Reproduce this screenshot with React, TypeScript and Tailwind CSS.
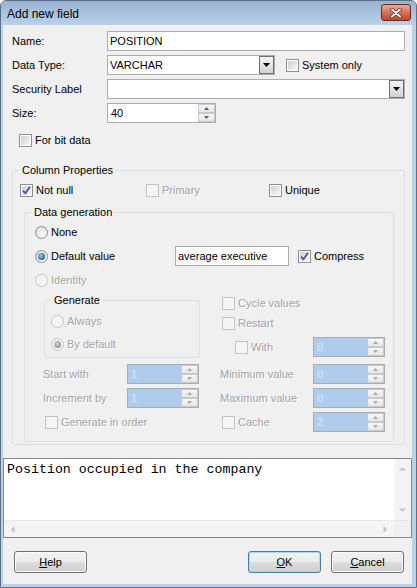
import clsx from "clsx";
import type { ReactNode } from "react";

type Flags = { checked?: boolean; disabled?: boolean };

const dimText = "text-[#a2a2a2] [text-shadow:1px_1px_0_#ffffff]";

function Check({ checked, disabled }: Flags) {
  return (
    <span
      className={clsx(
        "flex h-[13px] w-[13px] shrink-0 items-center justify-center border",
        disabled ? "border-[#c4c4c4] bg-[#f5f5f5]" : "border-[#8e8f8f] bg-white"
      )}
    >
      <span
        className={clsx(
          "flex h-[9px] w-[9px] items-center justify-center",
          disabled ? "bg-[#f5f5f5]" : "bg-gradient-to-br from-[#cdd0d5] to-[#f6f6f6]"
        )}
      >
        {checked && (
          <svg width="9" height="9" viewBox="0 0 9 9" className="overflow-visible">
            <path d="M1 4.6 L3.4 7.2 L8 0.8" fill="none" stroke="#4a5f97" strokeWidth="1.9" />
          </svg>
        )}
      </span>
    </span>
  );
}

function Radio({ checked, disabled }: Flags) {
  return (
    <span
      className={clsx(
        "flex h-[13px] w-[13px] shrink-0 items-center justify-center rounded-full border",
        disabled
          ? "border-[#c4c4c4] bg-[#f4f4f4]"
          : "border-[#8e8f8f] bg-[radial-gradient(circle_at_65%_65%,#ffffff,#d2d2d2)]"
      )}
    >
      {checked && (
        <span
          className={clsx(
            "h-[7px] w-[7px] rounded-full",
            disabled
              ? "bg-[radial-gradient(circle_at_40%_40%,#d6d6d6,#8c8c8c_80%)]"
              : "bg-[radial-gradient(circle_at_40%_40%,#8fdcf7,#14598a_75%)]"
          )}
        />
      )}
    </span>
  );
}

function CheckItem({ label, className, ...f }: Flags & { label: string; className?: string }) {
  return (
    <div className={clsx("flex h-[13px] items-center gap-[3px]", className)}>
      <Check {...f} />
      <span className={clsx("leading-[13px]", f.disabled ? dimText : "text-black")}>{label}</span>
    </div>
  );
}

function RadioItem({ label, className, ...f }: Flags & { label: string; className?: string }) {
  return (
    <div className={clsx("flex h-[13px] items-center gap-[3px]", className)}>
      <Radio {...f} />
      <span className={clsx("leading-[13px]", f.disabled ? dimText : "text-black")}>{label}</span>
    </div>
  );
}

function Spin({ disabled }: { disabled?: boolean }) {
  const fill = disabled ? "#a9a9a9" : "#4d6185";
  return (
    <span className="flex w-[17px] shrink-0 flex-col">
      <span className="flex flex-1 items-center justify-center border border-[#c9c9c9] bg-gradient-to-b from-[#f7f7f7] to-[#e6e6e6]">
        <svg width="5" height="3" viewBox="0 0 5 3">
          <path d="M0 3 L2.5 0 L5 3Z" fill={fill} />
        </svg>
      </span>
      <span className="flex flex-1 items-center justify-center border border-[#c9c9c9] bg-gradient-to-b from-[#f7f7f7] to-[#e6e6e6]">
        <svg width="5" height="3" viewBox="0 0 5 3">
          <path d="M0 0 L5 0 L2.5 3Z" fill={fill} />
        </svg>
      </span>
    </span>
  );
}

function NumBox({ value, disabled, className }: { value: string; disabled?: boolean; className?: string }) {
  return (
    <div
      className={clsx(
        "flex h-[20px] shrink-0 border",
        disabled ? "border-[#a9acb1] bg-[#b0ccec]" : "border-[#abadb3] bg-white",
        className
      )}
    >
      <span className={clsx("flex-1 pl-[3px] leading-[18px]", disabled ? "text-[#dfe7f0]" : "text-black")}>
        {value}
      </span>
      <Spin disabled={disabled} />
    </div>
  );
}

function TextBox({ value, className }: { value: string; className?: string }) {
  return (
    <div className={clsx("h-[20px] border border-[#abadb3] bg-white pl-[2px] leading-[18px] text-black", className)}>
      {value}
    </div>
  );
}

function Combo({ value, className }: { value: string; className?: string }) {
  return (
    <div className={clsx("flex h-[20px] items-center border border-[#abadb3] bg-white", className)}>
      <span className="flex-1 pl-[2px] text-black">{value}</span>
      <span className="flex h-[18px] w-[15px] items-center justify-center border border-[#707070] bg-gradient-to-b from-[#f3f3f3] to-[#d2d2d2]">
        <svg width="7" height="4" viewBox="0 0 7 4">
          <path d="M0 0H7L3.5 4Z" fill="#000" />
        </svg>
      </span>
    </div>
  );
}

function Group({ title, className, children }: { title: string; className?: string; children: ReactNode }) {
  return (
    <fieldset className={clsx("rounded-[3px] border border-[#d5dfe5]", className)}>
      <legend className="ml-[7px] px-[2px] leading-[13px] text-black">{title}</legend>
      {children}
    </fieldset>
  );
}

function Btn({ children, primary, className }: { children: ReactNode; primary?: boolean; className?: string }) {
  return (
    <div
      className={clsx(
        "flex h-[22px] w-[73px] items-center justify-center rounded-[3px] border bg-[linear-gradient(#f2f2f2,#ebebeb_50%,#dddddd_50%,#cfcfcf)] text-black",
        primary ? "border-[#3c7fb1] shadow-[inset_0_0_0_1px_#9fdcf7]" : "border-[#707070] shadow-[inset_0_0_0_1px_#fbfbfb]",
        className
      )}
    >
      {children}
    </div>
  );
}

function Arrow({ d }: { d: string }) {
  return (
    <svg width="7" height="7" viewBox="0 0 7 7">
      <path d={d} fill="#c2c2c2" />
    </svg>
  );
}

export default function App() {
  return (
    <div className="flex h-[588px] w-[417px] flex-col overflow-hidden rounded-t-[6px] border border-[#5d7088] bg-[#b9d1ea] font-['Liberation_Sans',Arial,sans-serif] text-[11px]">
      {/* title bar */}
      <div className="flex h-[24px] shrink-0 items-start justify-between bg-gradient-to-b from-[#98b3d2] to-[#b9d1ea] pl-[6px] pr-[5px]">
        <span className="mt-[6px] text-[12px] leading-[14px] text-black">Add new field</span>
        <div className="mt-[3px] flex h-[17px] w-[30px] items-center justify-center rounded-[3px] border border-[#6e2b20] bg-gradient-to-b from-[#e9ab9c] via-[#d5705c] to-[#c0432d]">
          <svg width="12" height="10" viewBox="0 0 12 10">
            <path d="M2 1.5 L10 8.5 M10 1.5 L2 8.5" stroke="#5b2a22" strokeWidth="3.6" strokeLinecap="round" />
            <path d="M2 1.5 L10 8.5 M10 1.5 L2 8.5" stroke="#ffffff" strokeWidth="2" strokeLinecap="round" />
          </svg>
        </div>
      </div>

      {/* client */}
      <div className="mb-[3px] ml-[2px] mr-[4px] flex flex-1 flex-col bg-[#f0f0f0]">
        <div className="flex flex-col pl-[9px] pr-[7px] pt-[6px]">
          <div className="flex h-[20px] items-center">
            <span className="w-[95px] text-black">Name:</span>
            <TextBox value="POSITION" className="flex-1" />
          </div>
          <div className="mt-[4px] flex h-[20px] items-center">
            <span className="w-[95px] text-black">Data Type:</span>
            <Combo value="VARCHAR" className="w-[168px]" />
            <CheckItem label="System only" className="ml-[11px]" />
          </div>
          <div className="mt-[4px] flex h-[20px] items-center">
            <span className="w-[95px] text-black">Security Label</span>
            <Combo value="" className="flex-1" />
          </div>
          <div className="mt-[4px] flex h-[20px] items-center">
            <span className="w-[95px] text-black">Size:</span>
            <NumBox value="40" className="w-[109px]" />
          </div>
          <CheckItem label="For bit data" className="ml-[7px] mt-[11px]" />

          <Group title="Column Properties" className="mt-[17px]">
            <div className="flex flex-col pb-[2px]">
              <div className="mt-[7px] flex pl-[7px]">
                <CheckItem label="Not null" checked className="w-[126px]" />
                <CheckItem label="Primary" disabled className="w-[123px]" />
                <CheckItem label="Unique" />
              </div>

              <Group title="Data generation" className="ml-[11px] mr-[10px] mt-[9px]">
                <div className="flex flex-col pb-[9px] pl-[10px]">
                  <RadioItem label="None" className="mt-[7px]" />
                  <div className="mt-[7px] flex h-[20px] items-center">
                    <RadioItem label="Default value" checked className="w-[140px]" />
                    <TextBox value="average executive" className="w-[114px]" />
                    <CheckItem label="Compress" checked className="ml-[9px]" />
                  </div>
                  <RadioItem label="Identity" disabled className="mt-[8px]" />

                  <div className="ml-[8px] mt-[7px] flex">
                    {/* left column */}
                    <div className="flex w-[157px] flex-col">
                      <Group title="Generate" className="ml-[1px]">
                        <div className="flex flex-col pb-[6px] pl-[6px]">
                          <RadioItem label="Always" disabled className="mt-[8px]" />
                          <RadioItem label="By default" checked disabled className="mt-[10px]" />
                        </div>
                      </Group>
                      <div className="mt-[6px] flex h-[20px] items-center">
                        <span className={clsx("w-[84px]", dimText)}>Start with</span>
                        <NumBox value="1" disabled className="w-[72px]" />
                      </div>
                      <div className="mt-[4px] flex h-[20px] items-center">
                        <span className={clsx("w-[84px]", dimText)}>Increment by</span>
                        <NumBox value="1" disabled className="w-[72px]" />
                      </div>
                      <CheckItem label="Generate in order" disabled className="ml-[2px] mt-[8px]" />
                    </div>

                    {/* right column */}
                    <div className="ml-[20px] flex w-[165px] flex-col">
                      <CheckItem label="Cycle values" disabled className="ml-[2px] mt-[3px]" />
                      <CheckItem label="Restart" disabled className="ml-[2px] mt-[7px]" />
                      <div className="mt-[7px] flex h-[20px] items-center">
                        <CheckItem label="With" disabled className="ml-[15px]" />
                        <NumBox value="0" disabled className="ml-auto w-[72px]" />
                      </div>
                      <div className="mt-[7px] flex h-[20px] items-center">
                        <span className={dimText}>Minimum value</span>
                        <NumBox value="0" disabled className="ml-auto w-[72px]" />
                      </div>
                      <div className="mt-[4px] flex h-[20px] items-center">
                        <span className={dimText}>Maximum value</span>
                        <NumBox value="0" disabled className="ml-auto w-[72px]" />
                      </div>
                      <div className="mt-[4px] flex h-[20px] items-center">
                        <CheckItem label="Cache" disabled className="ml-[2px]" />
                        <NumBox value="2" disabled className="ml-auto w-[72px]" />
                      </div>
                    </div>
                  </div>
                </div>
              </Group>
            </div>
          </Group>
        </div>

        {/* comment memo */}
        <div className="mt-[13px] flex h-[80px] flex-col border border-[#828790] bg-white">
          <div className="flex min-h-0 flex-1">
            <div className="flex-1 pl-[3px] pt-[3px] font-['Liberation_Mono','Courier_New',monospace] text-[13.3px] leading-[15px] text-black">
              Position occupied in the company
            </div>
            <div className="flex w-[17px] flex-col items-center justify-between bg-[#f4f4f4] py-[6px]">
              <Arrow d="M0 5.5 L3.5 2 L7 5.5Z" />
              <Arrow d="M0 1.5 L7 1.5 L3.5 5Z" />
            </div>
          </div>
          <div className="flex h-[17px] border-t border-[#e8e8e8]">
            <div className="flex flex-1 items-center justify-between bg-[#f4f4f4] px-[5px]">
              <Arrow d="M5.5 0 L5.5 7 L2 3.5Z" />
              <Arrow d="M1.5 0 L5 3.5 L1.5 7Z" />
            </div>
            <div className="w-[17px] bg-[#f0f0f0]" />
          </div>
        </div>

        {/* buttons */}
        <div className="mt-[13px] flex pl-[11px] pr-[8px]">
          <Btn>
            <span>
              <span className="underline">H</span>elp
            </span>
          </Btn>
          <Btn primary className="ml-auto">
            <span>
              <span className="underline">O</span>K
            </span>
          </Btn>
          <Btn className="ml-[10px]">
            <span>
              <span className="underline">C</span>ancel
            </span>
          </Btn>
        </div>
      </div>
    </div>
  );
}
